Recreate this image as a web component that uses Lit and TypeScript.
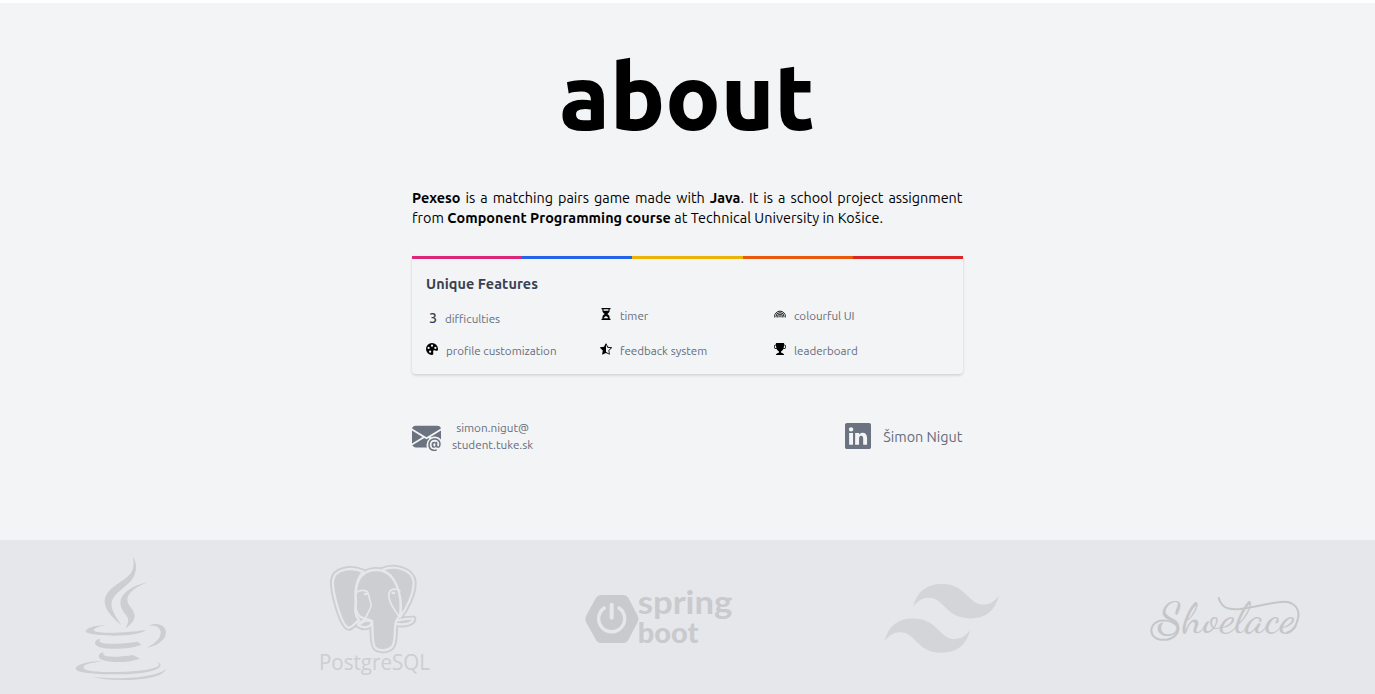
import { LitElement, html, css, svg } from "lit";
import { customElement } from "lit/decorators.js";

const icons = {
  hourglass: svg`<path d="M2 0h12v1.6h-1.2v2.2c0 2-1.3 3.1-3 4.2 1.700 1.100 3 2.200 3 4.200v2.200H14V16H2v-1.600h1.200v-2.200c0-2 1.300-3.100 3-4.200-1.700-1.100-3-2.200-3-4.200V1.600H2z"/><path d="M4.700 1.800h6.600v2H4.700zM5 13.700c.4-1.500 1.700-2 3-3 1.300 1 2.600 1.500 3 3z" fill="#f3f4f6"/>`,
  rainbow: svg`<g fill="none" stroke="#000" stroke-width="1.150"><path d="M.7 12.500v-1a7.300 7.300 0 0 1 14.600 0v1M2.700 12.500v-1a5.300 5.300 0 0 1 10.600 0v1M4.700 12.500v-1a3.300 3.300 0 0 1 6.600 0v1M6.700 12.500v-1a1.300 1.300 0 0 1 2.600 0v1"/></g>`,
  palette: svg`<path d="M12.433 10.07C14.133 10.585 16 11.15 16 8a8 8 0 1 0-8 8c1.996 0 1.826-1.504 1.649-3.08-.124-1.101-.252-2.237.351-2.92.465-.527 1.42-.237 2.433.07zM8 5a1.5 1.5 0 1 1 0-3 1.5 1.5 0 0 1 0 3zm4.500 3a1.500 1.500 0 1 1 0-3 1.500 1.500 0 0 1 0 3zM5 6.500a1.500 1.500 0 1 1-3 0 1.500 1.500 0 0 1 3 0zm.5 6.500a1.500 1.500 0 1 1 0-3 1.500 1.500 0 0 1 0 3z"/>`,
  star: svg`<path d="M5.354 5.119 7.538.792A.516.516 0 0 1 8 .5c.183 0 .366.097.465.292l2.184 4.327 4.898.696A.537.537 0 0 1 16 6.32a.548.548 0 0 1-.17.445l-3.523 3.356.83 4.73c.078.443-.36.79-.746.592L8 13.187l-4.389 2.256a.52.52 0 0 1-.146.05c-.342.06-.668-.254-.6-.642l.83-4.73L.173 6.765a.55.55 0 0 1-.172-.403.58.58 0 0 1 .085-.302.513.513 0 0 1 .37-.245l4.898-.696zM8 12.027a.5.5 0 0 1 .232.056l3.686 1.894-.694-3.957a.565.565 0 0 1 .162-.505l2.907-2.770-4.052-.576a.525.525 0 0 1-.393-.288L8.001 2.223 8 2.226v9.800z"/>`,
  trophy: svg`<path d="M2.5.5A.5.5 0 0 1 3 0h10a.5.5 0 0 1 .5.5c0 .538-.012 1.050-.034 1.536a3 3 0 1 1-1.133 5.890c-.79 1.865-1.878 2.777-2.833 3.011v2.173l1.425.356c.194.048.377.135.537.255L13.300 15.100a.5.5 0 0 1-.3.9H3a.5.5 0 0 1-.3-.9l1.838-1.379c.16-.12.343-.207.537-.255L6.500 13.110v-2.173c-.955-.234-2.043-1.146-2.833-3.012a3 3 0 1 1-1.132-5.890A33.076 33.076 0 0 1 2.500.5zm.099 2.540a2 2 0 0 0 .72 3.935c-.333-1.050-.588-2.346-.72-3.935zm10.083 3.935a2 2 0 0 0 .72-3.935c-.133 1.590-.388 2.885-.72 3.935z"/>`,
  mail: svg`<path d="M2 2A2 2 0 0 0 .05 3.555L8 8.414l7.950-4.859A2 2 0 0 0 14 2H2Zm-2 9.800V4.698l5.803 3.546L0 11.801Zm6.761-2.970-6.570 4.026A2 2 0 0 0 2 14h6.256A4.493 4.493 0 0 1 8 12.500a4.490 4.490 0 0 1 1.606-3.446l-.367-.225L8 9.586l-1.239-.757ZM16 9.671V4.697l-5.803 3.546.338.208A4.482 4.482 0 0 1 12.500 8c1.414 0 2.675.652 3.500 1.671Z"/><path d="M15.834 12.244c0 1.168-.577 2.025-1.587 2.025-.503 0-1.002-.228-1.120-.648h-.043c-.118.416-.543.643-1.015.643-.77 0-1.259-.542-1.259-1.434v-.529c0-.844.481-1.400 1.260-1.400.585 0 .87.333.953.63h.03v-.568h.905v2.190c0 .272.18.42.411.42.315 0 .639-.415.639-1.390v-.118c0-1.277-.95-2.326-2.484-2.326h-.04c-1.582 0-2.640 1.067-2.640 2.724v.157c0 1.867 1.237 2.654 2.570 2.654h.045c.507 0 .935-.07 1.180-.18v.731c-.219.1-.643.175-1.237.175h-.044C10.438 16 9 14.820 9 12.646v-.214C9 10.360 10.421 9 12.485 9h.035c2.120 0 3.314 1.430 3.314 3.034v.21Zm-4.040.21v.227c0 .586.227.8.581.8.31 0 .564-.17.564-.743v-.367c0-.516-.275-.708-.572-.708-.346 0-.573.245-.573.791Z"/>`,
  linkedin: svg`<path d="M0 1.146C0 .513.526 0 1.175 0h13.650C15.474 0 16 .513 16 1.146v13.708c0 .633-.526 1.146-1.175 1.146H1.175C.526 16 0 15.487 0 14.854V1.146zm4.943 12.248V6.169H2.542v7.225h2.401zm-1.200-8.212c.837 0 1.358-.554 1.358-1.248-.015-.709-.52-1.248-1.342-1.248-.822 0-1.359.54-1.359 1.248 0 .694.521 1.248 1.327 1.248h.016zm4.908 8.212V9.359c0-.216.016-.432.08-.586.173-.431.568-.878 1.232-.878.869 0 1.216.662 1.216 1.634v3.865h2.401V9.250c0-2.220-1.184-3.252-2.764-3.252-1.274 0-1.845.7-2.165 1.193v.025h-.016a5.540 5.540 0 0 1 .016-.025V6.169h-2.400c.03.678 0 7.225 0 7.225h2.400z"/>`,
};

type IconName = keyof typeof icons;

const icon = (name: IconName, cls = "icon") =>
  html`<svg class=${cls} viewBox="0 0 16 16" fill="currentColor" aria-hidden="true">${icons[name]}</svg>`;

const elephant = svg`
  <path d="M174 65C140 50 88 56 84 92C82 126 108 222 128 232C138 237 148 220 162 210C148 194 150 178 153 158C150 116 154 90 174 65Z"/>
  <path d="M232 60C268 44 322 58 326 96C327 132 303 178 285 201C292 158 282 90 232 60Z"/>
  <path d="M273 212C288 209 304 205 325 206C324 220 300 226 273 222Z"/>
  <path d="M159 225C174 215 182 207 201 214C201 231 178 238 159 225Z"/>
  <path d="M153 158C148 108 160 62 210 60C270 57 294 130 285 198C276 206 272 212 271 224C268 252 272 276 261 290C248 304 220 304 210 292C200 278 204 240 201 213C190 206 168 208 160 194C153 184 150 174 153 158Z"/>`;

@customElement("app-root")
export class AppRoot extends LitElement {
  static styles = css`
    :host { display: flex; flex-direction: column; height: 694px; overflow: hidden; background: #f3f4f6; box-sizing: border-box; border-top: 3px solid #fff; font-family: Ubuntu, "Noto Sans", sans-serif; color: #000; }
    * { box-sizing: border-box; }
    main { width: 550.500px; margin-left: 412px; height: 537.400px; display: flex; flex-direction: column; flex: none; }
    h1 { margin: 0; height: 185px; padding-top: 26px; line-height: 135px; font-size: 91.500px; font-weight: 800; text-align: center; white-space: nowrap; }
    .intro { margin: 0; height: 68px; font-size: 14.400px; line-height: 20px; }
    .line { display: block; white-space: nowrap; }
    .full { text-align: justify; text-align-last: justify; }
    .last { letter-spacing: 0.060px; }
    .card { height: 117.500px; border-radius: 0 0 4px 4px; box-shadow: 0 1px 3px rgba(0,0,0,.1), 0 2px 3px rgba(0,0,0,.06); }
    .stripes { display: grid; grid-template-columns: repeat(5, 1fr); height: 3px; margin-right: -0.500px; }
    .pink { background: #db2777; } .blue { background: #2563eb; } .yellow { background: #eab308; } .orange { background: #ea580c; } .red { background: #dc2626; }
    .body { padding: 14px 14px 0; }
    h2 { margin: 0; line-height: 22px; font-size: 14.400px; letter-spacing: .080px; font-weight: 700; color: #374151; }
    .features { display: grid; grid-template-columns: 174px 174px 1fr; grid-template-rows: 34.500px 30px; margin-top: 11px; color: #646c7b; font-size: 11.600px; line-height: 20px; }
    .feature { display: flex; align-items: flex-start; white-space: nowrap; }
    .feature .icon { color: #000; width: 12px; height: 12px; margin: 2px 8px 0 0; flex: none; }
    .low { padding-top: 3px; }
    .count { color: #374151; font-size: 14.400px; font-weight: 500; width: 19px; padding-left: 3px; line-height: 18px; }
    .contacts { display: flex; justify-content: space-between; margin-top: 40.500px; color: #646c7b; }
    .contact { display: flex; align-items: center; height: 44px; }
    .mail-icon { width: 29px; height: 29px; margin-right: 11px; color: #6b7280; }
    .mail { text-align: center; font-size: 11.700px; line-height: 17.500px; }
    .in-icon { width: 26px; height: 26px; margin-right: 12px; color: #6b7280; }
    .name { font-size: 14.400px; padding-top: 1px; }
    footer { flex: none; height: 154px; background: #e5e7eb; display: grid; grid-template-columns: 245px 265px 300px 260px 190px; padding-left: 60px; color: #ccced1; }
    footer svg { height: 154px; display: block; fill: currentColor; }
    .java { width: 130px; } .pg { width: 140px; } .spring { width: 180px; color: #c9cacd; } .tailwind { width: 150px; color: #d4d5d8; } .shoelace { width: 190px; color: #c5c6c8; }
    .pg-name { font: 400 65px "Open Sans", sans-serif; }
    .spring-name { font: 700 100px "Lato", sans-serif; }
    .boot-name { font: 900 84px "Lato", sans-serif; }
    .shoe-name { font: 400 124px "Dancing Script", "Sacramento", "Pacifico", cursive; }
  `;

  render() {
    return html`
      <main>
        <h1>about</h1>
        <p class="intro">
          <span class="line full"><b>Pexeso</b> is a matching pairs game made with <b>Java</b>. It is a school project assignment</span>
          <span class="line last">from <b>Component Programming course</b> at Technical University in Košice.</span>
        </p>
        <section class="card">
          <div class="stripes"><i class="pink"></i><i class="blue"></i><i class="yellow"></i><i class="orange"></i><i class="red"></i></div>
          <div class="body">
            <h2>Unique Features</h2>
            <div class="features">
              <div class="feature low"><span class="count">3</span><span>difficulties</span></div>
              <div class="feature">${icon("hourglass")}<span>timer</span></div>
              <div class="feature">${icon("rainbow")}<span>colourful UI</span></div>
              <div class="feature">${icon("palette")}<span>profile customization</span></div>
              <div class="feature">${icon("star")}<span>feedback system</span></div>
              <div class="feature">${icon("trophy")}<span>leaderboard</span></div>
            </div>
          </div>
        </section>
        <div class="contacts">
          <div class="contact">${icon("mail", "mail-icon")}<span class="mail">simon.nigut@<br />student.tuke.sk</span></div>
          <div class="contact">${icon("linkedin", "in-icon")}<span class="name">Šimon Nigut</span></div>
        </div>
      </main>
      <footer>
        <svg class="java" viewBox="0 15 390 462">
          <path d="M219 66C231 84 231 106 220 127C208 149 181 163 164 183C146 205 154 228 184 270C151 243 134 222 134 199C136 160 185 144 207 121C223 104 222 88 219 66Z"/>
          <path d="M263 142C223 157 202 176 202 194C202 214 222 220 224 242C224 257 212 269 197 280C209 257 206 250 196 238C175 211 177 188 199 170C215 156 239 147 263 142Z"/>
          <path d="M138 271C113 274 99 282 102 287C112 297 203 294 257 285C246 297 204 302 160 302C116 301 76 297 77 289C78 278 112 269 138 271Z"/>
          <path d="M265 272C287 261 317 268 318 291C318 315 291 334 260 338C287 324 303 310 302 291C300 275 284 269 265 272Z"/>
          <path d="M120 312C113 324 131 327 167 326C194 325 215 322 234 320L244 330C216 340 184 342 155 341C120 340 104 333 105 323C106 316 112 312 120 312Z"/>
          <path d="M131 352C124 364 145 366 175 365C194 364 207 362 219 360L240 371C214 380 190 382 163 381C132 380 116 373 116 364C117 356 123 353 131 352Z"/>
          <path d="M127 379C93 383 70 389 70 398C73 409 128 412 177 411C235 410 283 403 294 394C299 389 297 385 293 381C305 386 304 395 293 401C265 414 218 418 164 418C100 418 47 412 47 401C48 387 94 376 127 379Z"/>
          <path d="M318 402C309 428 238 436 181 435C149 435 122 432 98 427C156 431 205 430 244 425C282 420 307 413 318 402Z"/>
        </svg>
        <svg class="pg" viewBox="0 -30 420 462">
          <g stroke="#ccced1" stroke-width="18" stroke-linejoin="round">${elephant}</g>
          <g stroke="#e5e7eb" stroke-width="7" stroke-linejoin="round">${elephant}</g>
          <g fill="none" stroke="#e5e7eb" stroke-width="5" stroke-linecap="round">
            <path d="M153 129C162 119 185 118 189 129C194 139 192 150 198 160C200 174 190 184 185 197C180 210 168 217 155 219M285 122C270 113 255 118 252 129C248 153 265 174 281 198"/>
          </g>
          <g fill="#e5e7eb"><ellipse cx="183" cy="132" rx="7" ry="4"/><ellipse cx="265" cy="129" rx="6" ry="4"/></g>
          <text class="pg-name" x="42" y="360" textLength="333" lengthAdjust="spacingAndGlyphs">PostgreSQL</text>
        </svg>
        <svg class="spring" viewBox="0 -90 540 462">
          <path d="M93 75H160Q170 75 175 83L203 137Q208 147 203 156L175 210Q170 219 160 219H93Q83 219 78 210L48 156Q44 147 48 138L78 83Q83 75 93 75Z"/>
          <g fill="none" stroke="#e5e7eb" stroke-width="10" stroke-linecap="round"><path d="M103 114A39 39 0 1 0 147 114"/><path stroke-width="12" d="M125 104V143"/></g>
          <text class="spring-name" x="203" y="131" textLength="284" lengthAdjust="spacingAndGlyphs">spring</text>
          <text class="boot-name" x="203" y="219" textLength="182" lengthAdjust="spacingAndGlyphs">boot</text>
        </svg>
        <svg class="tailwind" viewBox="0 -90 450 462">
          <path transform="translate(43 42) scale(6.370)" d="M27 0c-7.200 0-11.700 3.600-13.500 10.800 2.700-3.600 5.850-4.950 9.450-4.050 2.054.513 3.522 2.004 5.147 3.653C30.744 13.090 33.808 16.200 40.500 16.200c7.200 0 11.700-3.600 13.500-10.800-2.700 3.600-5.850 4.950-9.450 4.050-2.054-.513-3.522-2.004-5.147-3.653C36.756 3.110 33.692 0 27 0zM13.500 16.200C6.300 16.200 1.800 19.800 0 27c2.700-3.600 5.850-4.950 9.450-4.050 2.054.514 3.522 2.004 5.147 3.653C17.244 29.290 20.308 32.400 27 32.400c7.200 0 11.700-3.600 13.500-10.800-2.700 3.600-5.850 4.950-9.450 4.050-2.054-.513-3.522-2.004-5.147-3.653C23.256 19.310 20.192 16.200 13.500 16.200z"/>
        </svg>
        <svg class="shoelace" viewBox="0 -120 570 462">
          <text class="shoe-name" x="84" y="157" textLength="412" lengthAdjust="spacingAndGlyphs">Shoelace</text>
          <g fill="none" stroke="currentColor" stroke-width="6" stroke-linecap="round">
            <path d="M266 54C276 84 293 90 330 87C378 82 435 64 465 65C499 67 511 94 503 119C498 140 486 153 471 158"/>
            <path d="M146 145C131 119 84 112 68 137C55 163 77 183 109 179C133 176 145 160 146 145"/>
          </g>
        </svg>
      </footer>
    `;
  }
}
